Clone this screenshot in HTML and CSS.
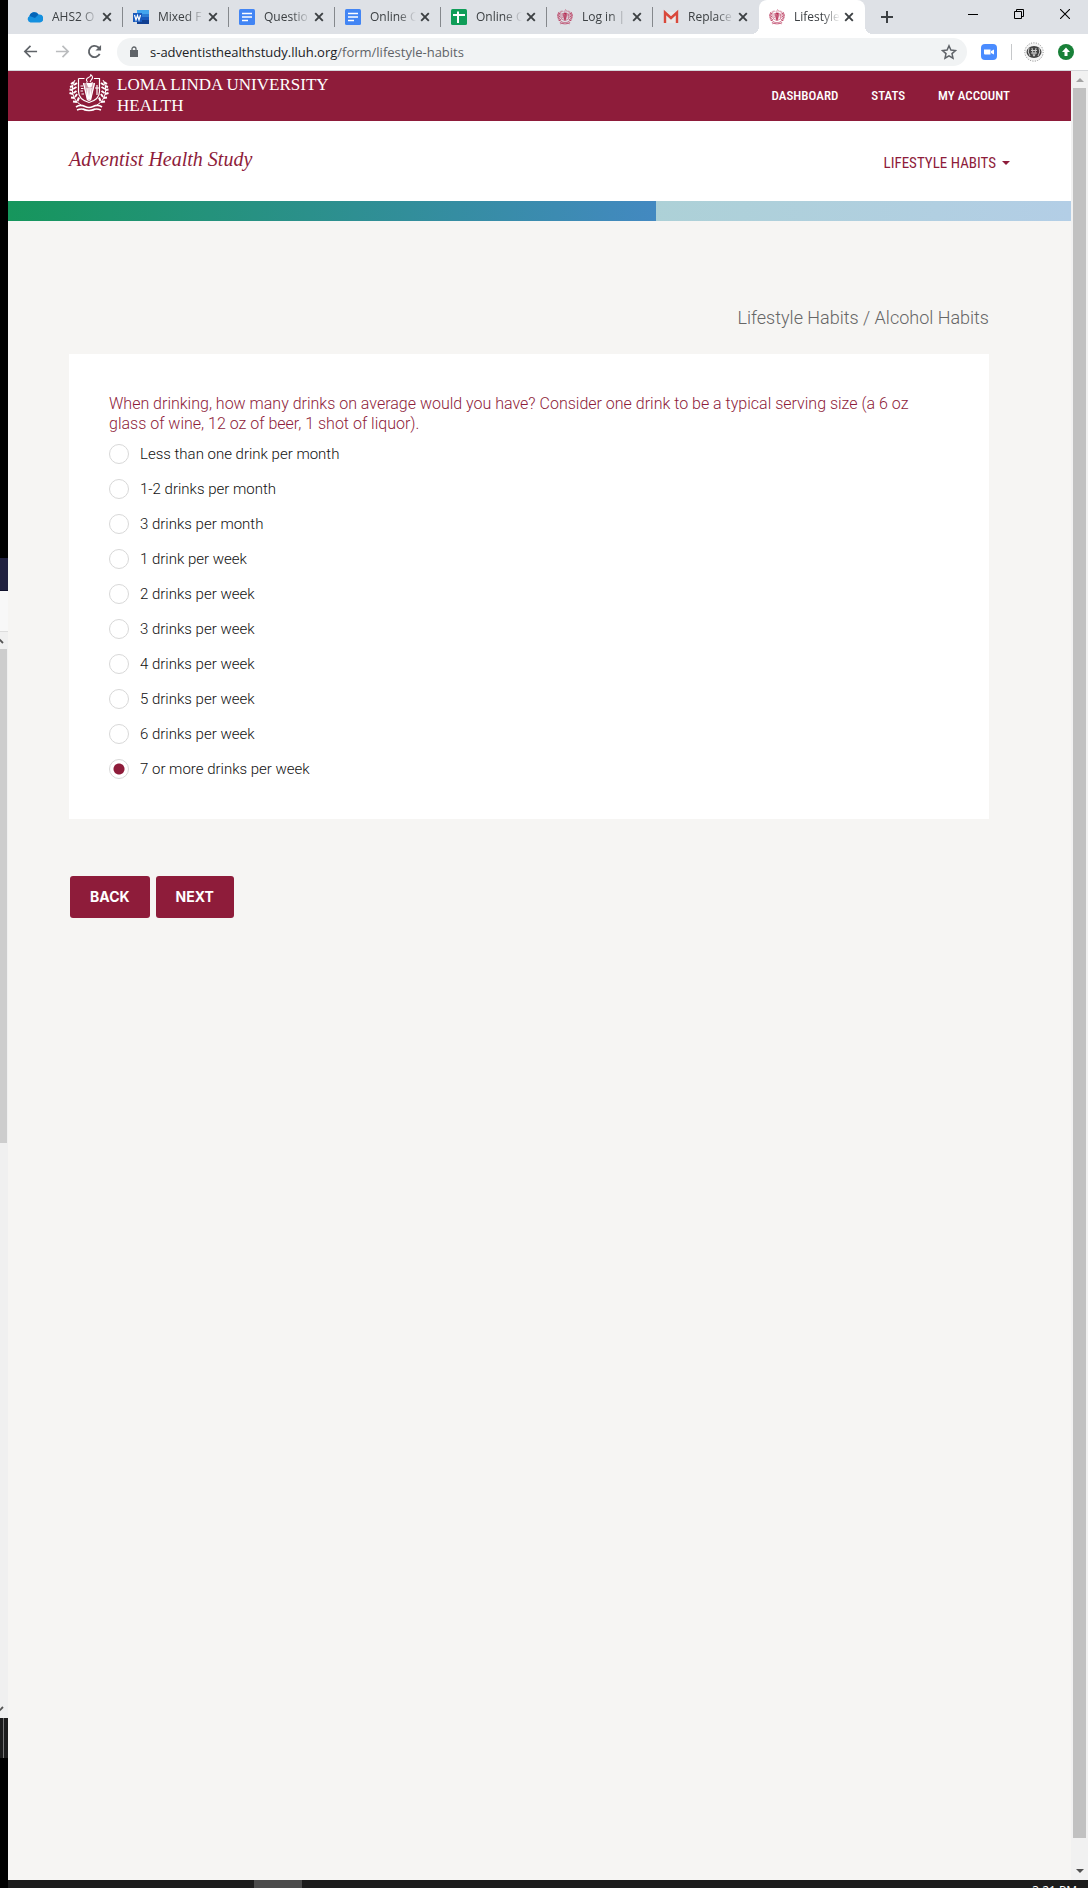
FILE: index.html
```html
<!DOCTYPE html>
<html lang="en">
<head>
<meta charset="utf-8">
<meta name="viewport" content="width=device-width, initial-scale=1">
<title>Lifestyle Habits | Adventist Health Study</title>
<link rel="stylesheet" href="styles.css">
</head>
<body>
<svg class="sprite" aria-hidden="true">
  <symbol id="x" viewBox="0 0 10 10"><path d="M1.2 1.2l7.6 7.6M8.8 1.2L1.2 8.8" stroke="#3c4043" stroke-width="1.9"/></symbol>
  <symbol id="doc" viewBox="0 0 16 16"><rect width="16" height="16" rx="1.5" fill="#4285f4"/><path d="M3 4.500h10M3 8h10M3 11.500h6" stroke="#fff" stroke-width="1.7"/></symbol>
  <symbol id="crest" viewBox="0 0 40 38">
    <path d="M14 9h12l-4.500 18h-3z" fill="currentColor" opacity=".55"/>
    <path d="M17 8q3 2 7 0l-1.500 5q-2 1-3.500 0z" fill="currentColor"/>
    <g fill="none" stroke="currentColor">
      <path d="M9.500 4.500h6M25 4.500h5.500v13q0 8-10.500 11Q9.500 25.500 9.500 17.500v-13" stroke-width="1.200"/>
      <path d="M14.500 9l4 17M25.500 9l-4 17M20 14v13M18 14l1 11M22 14l-1 11" stroke-width="1.200"/>
      <path d="M18.500 8q-2.500-3 1-4.500 3-1.500 2-3 3.500 2.500 1 5L21 8" stroke-width="1.100"/>
      <path d="M11.500 12h2.500M12 14.500h2.500M11.500 17h2.500M12.500 20h2.500M28 11v10M26 14h4" stroke-width="1.200"/>
      <path d="M6 6C1 14 3 26 12 31M34 6c5 8 3 20-6 25" stroke-width="1"/>
      <path d="M5 8L2 10M4 12L1 13M3.500 16l-3-.5M4 20l-3.500-1M5.500 24L2 23.500M8 28l-4-.5M5 11l3-2M4 15l3.500-2M4.500 19l3-2M6 23l2-3M8.500 27l1.500-3.500M35 8l3 2M36 12l3 1M36.500 16l3-.5M36 20l3.500-1M34.500 24l3.500-.5M32 28l4-.5M35 11l-3-2M36 15l-3.500-2M35.500 19l-3-2M34 23l-2-3M31.500 27L30 23.500" stroke-width="2"/>
      <path d="M7 33q4-3 9-.5 4 2 8 0 5-2.500 9 .5M8 36q5-2 8 0M32 36q-5-2-8 0M14 35q6 3 12 0" stroke-width="1.600"/>
    </g>
  </symbol>
</svg>
<div class="desktop">
  <aside class="behind" aria-hidden="true">
    <div class="behind-navy"></div>
    <div class="behind-pale"></div>
    <div class="behind-track">
      <svg class="edge-arrow" viewBox="0 0 4 6"><path d="M-1 1l4 4" stroke="#555" stroke-width="1.800"/></svg>
      <div class="behind-thumb"></div>
      <svg class="edge-arrow" viewBox="0 0 4 6"><path d="M-1 5l4-4" stroke="#555" stroke-width="1.800"/></svg>
    </div>
    <div class="behind-task"></div>
  </aside>

  <div class="browser">
    <div class="tabstrip">
      <div class="tab"><svg class="fav" viewBox="0 0 16 16"><path d="M3.500 13.500A3.500 3.500 0 0 1 2.500 7 5 5 0 0 1 11.500 5.500a4 4 0 0 1 1.500 8z" fill="#1490df"/><path d="M2.500 7A5 5 0 0 1 11.500 5.500L8 9z" fill="#0364b8"/></svg><span>AHS2 O</span><button aria-label="Close tab"><svg><use href="#x"/></svg></button></div>
      <div class="tab"><svg class="fav" viewBox="0 0 16 16"><path d="M4 1h12v4H4z" fill="#41a5ee"/><path d="M4 5h12v3H4z" fill="#2b7cd3"/><path d="M4 8h12v3H4z" fill="#185abd"/><path d="M4 11h12v4H4z" fill="#103f91"/><path d="M0 4h9v9H0z" fill="#185abd"/><path d="M1.500 6l1.500 5 1.500-4.500L6 11l1.500-5" fill="none" stroke="#fff" stroke-width="1.200"/></svg><span>Mixed F</span><button aria-label="Close tab"><svg><use href="#x"/></svg></button></div>
      <div class="tab"><svg class="fav"><use href="#doc"/></svg><span>Questio</span><button aria-label="Close tab"><svg><use href="#x"/></svg></button></div>
      <div class="tab"><svg class="fav"><use href="#doc"/></svg><span>Online C</span><button aria-label="Close tab"><svg><use href="#x"/></svg></button></div>
      <div class="tab"><svg class="fav" viewBox="0 0 16 16"><rect width="16" height="16" rx="1.500" fill="#0f9d58"/><path d="M2 6h12M7 2.500v11.500" stroke="#fff" stroke-width="2"/></svg><span>Online C</span><button aria-label="Close tab"><svg><use href="#x"/></svg></button></div>
      <div class="tab"><svg class="fav crest"><use href="#crest"/></svg><span>Log in |</span><button aria-label="Close tab"><svg><use href="#x"/></svg></button></div>
      <div class="tab"><svg class="fav" viewBox="0 0 16 16"><path d="M2 3h12v11H2z" fill="#e8e8e8"/><path d="M2 14V3.500l6 5.500 6-5.500V14" fill="none" stroke="#d9483b" stroke-width="2.400"/></svg><span>Replace</span><button aria-label="Close tab"><svg><use href="#x"/></svg></button></div>
      <div class="tab active"><svg class="fav crest"><use href="#crest"/></svg><span>Lifestyle</span><button aria-label="Close tab"><svg><use href="#x"/></svg></button></div>
      <button class="newtab" aria-label="New tab"><svg viewBox="0 0 12 12"><path d="M6 0v12M0 6h12" stroke="#3c4043" stroke-width="2"/></svg></button>
      <div class="winbuttons">
        <button aria-label="Minimize"><svg viewBox="0 0 10 10"><path d="M0 5.500h10" stroke="#000"/></svg></button>
        <button aria-label="Restore"><svg viewBox="0 0 10 10"><path d="M.5 2.500h7v7h-7zM2.500 2.500v-2h7v7h-2" fill="none" stroke="#000"/></svg></button>
        <button aria-label="Close"><svg viewBox="0 0 10 10"><path d="M0 0l10 10M10 0L0 10" stroke="#000" stroke-width="1.100"/></svg></button>
      </div>
    </div>

    <div class="toolbar">
      <button class="tool" aria-label="Back"><svg viewBox="0 0 16 16"><path d="M15 8H2M8 2L2 8l6 6" fill="none" stroke="#5f6368" stroke-width="1.800"/></svg></button>
      <button class="tool" aria-label="Forward"><svg viewBox="0 0 16 16"><path d="M1 8h13M8 2l6 6-6 6" fill="none" stroke="#babcbe" stroke-width="1.800"/></svg></button>
      <button class="tool" aria-label="Reload"><svg viewBox="0 0 16 16"><path d="M13.500 10.500A6 6 0 1 1 12 3.500L14 5.500" fill="none" stroke="#5f6368" stroke-width="2"/><path d="M15 1v6H9z" fill="#5f6368"/></svg></button>
      <div class="omnibox">
        <svg class="lock" viewBox="0 0 8 12"><path d="M0 4h8v7H0z" fill="#5f6368"/><path d="M2 4V3a2 2 0 0 1 4 0v1" fill="none" stroke="#5f6368" stroke-width="1.300"/></svg>
        <div class="url">s-adventisthealthstudy.lluh.org<span>/form/lifestyle-habits</span></div>
        <button aria-label="Bookmark this tab"><svg viewBox="0 0 16 16"><path d="M8 1.800l1.900 4.300 4.600.4-3.500 3.100 1 4.600L8 11.800l-4 2.400 1-4.600-3.500-3.100 4.600-.4z" fill="none" stroke="#5f6368" stroke-width="1.500"/></svg></button>
      </div>
      <svg class="ext" viewBox="0 0 16 16"><rect width="16" height="16" rx="4" fill="#4a8cff"/><path d="M3 5.500h6.500v5H4a1 1 0 0 1-1-1zM10 7l3-1.500v5L10 9z" fill="#fff"/></svg>
      <div class="divider"></div>
      <svg class="avatar" viewBox="0 0 20 20"><circle cx="10" cy="10" r="9.200" fill="#f4f4f4" stroke="#888" stroke-dasharray="1 1.500"/><ellipse cx="10" cy="10" rx="7.500" ry="6" fill="#444"/><path d="M5 6q-2 4 1 8M15 6q2 4-1 8M8 6l1.500 8h1L12 6M7 8.500h6M7 11h6" fill="none" stroke="#ccc"/></svg>
      <svg class="ext" viewBox="0 0 16 16"><circle cx="8" cy="8" r="8" fill="#188038"/><path d="M8 3.500l4 4.500H9.500v4h-3V8H4z" fill="#fff"/></svg>
    </div>

    <div class="viewport">
      <div class="page">
        <header class="masthead">
          <a class="brand" href="#"><svg class="logo"><use href="#crest"/></svg><span>LOMA LINDA UNIVERSITY<br>HEALTH</span></a>
          <nav class="mainnav"><a href="#">DASHBOARD</a><a href="#">STATS</a><a href="#">MY ACCOUNT</a></nav>
        </header>
        <div class="subhead">
          <a class="study" href="#">Adventist Health Study</a>
          <button class="section">LIFESTYLE HABITS<i class="caret"></i></button>
        </div>
        <div class="progress" role="progressbar" aria-label="Survey progress" aria-valuenow="61" aria-valuemin="0" aria-valuemax="100"><div style="width:61%"></div></div>
        <main>
          <p class="crumbs">Lifestyle Habits / Alcohol Habits</p>
          <form>
            <fieldset class="card">
              <legend>When drinking, how many drinks on average would you have? Consider one drink to be a typical serving size (a 6 oz glass of wine, 12 oz of beer, 1 shot of liquor).</legend>
              <label><input type="radio" name="drinks">Less than one drink per month</label>
              <label><input type="radio" name="drinks">1-2 drinks per month</label>
              <label><input type="radio" name="drinks">3 drinks per month</label>
              <label><input type="radio" name="drinks">1 drink per week</label>
              <label><input type="radio" name="drinks">2 drinks per week</label>
              <label><input type="radio" name="drinks">3 drinks per week</label>
              <label><input type="radio" name="drinks">4 drinks per week</label>
              <label><input type="radio" name="drinks">5 drinks per week</label>
              <label><input type="radio" name="drinks">6 drinks per week</label>
              <label><input type="radio" name="drinks" checked>7 or more drinks per week</label>
            </fieldset>
            <div class="actions"><button type="button">BACK</button><button type="button">NEXT</button></div>
          </form>
        </main>
      </div>
      <div class="scrollbar" aria-hidden="true">
        <svg viewBox="0 0 8 4"><path d="M0 4l4-4 4 4z" fill="#a3a3a3"/></svg>
        <div class="thumb"></div>
        <svg viewBox="0 0 8 4"><path d="M0 0h8L4 4z" fill="#505050"/></svg>
      </div>
    </div>
    <div class="taskbar"><div class="task"></div><time>3:21 PM</time></div>
  </div>
</div>
</body>
</html>
```
FILE: styles.css
```css
* { box-sizing: border-box; }
body { margin: 0; font-family: Roboto, "Liberation Sans", sans-serif; background: #000; }
button { font: inherit; border: 0; background: none; padding: 0; margin: 0; display: flex; align-items: center; justify-content: center; }
a { color: inherit; text-decoration: none; }
svg { display: block; flex: none; }
.sprite { position: absolute; width: 0; height: 0; }

.desktop { display: flex; min-height: 100vh; }

/* sliver of the windows behind the browser */
.behind { width: 8px; flex: none; display: flex; flex-direction: column; padding: 558px 0 130px; }
.behind-navy { height: 33px; background: #20213f; border-bottom: 1px solid #11122c; }
.behind-pale { height: 40px; background: #f8f8f8; }
.behind-track { flex: 1; background: #f0f0f0; border-top: 1px solid #ddd; display: flex; flex-direction: column; justify-content: space-between; padding: 6px 0; }
.edge-arrow { width: 4px; height: 6px; }
.behind-thumb { width: 7px; height: 494px; margin: 5px 0 auto; background: #cdcdcd; }
.behind-task { height: 40px; background: linear-gradient(90deg, #1c1c1c 3px, #777 3px, #777 4px, #1c1c1c 4px); }

.browser { flex: 1; min-width: 0; display: flex; flex-direction: column; background: #fff; }

.tabstrip { height: 34px; background: #dee1e6; display: flex; padding-left: 9px; font: 12px/16px "Open Sans", "Noto Sans", sans-serif; color: #3c4043; }
.tab { flex: 0 1 106px; min-width: 0; display: flex; align-items: center; padding: 0 11px 0 10px; position: relative; }
.tab:not(.active)::after { content: ""; position: absolute; right: 0; top: 7px; width: 1px; height: 20px; background: #85888c; }
.tab:nth-child(7)::after { display: none; }
.tab span { flex: 1; min-width: 0; margin: 0 0 0 9px; white-space: nowrap; mask-image: linear-gradient(90deg, #000 28px, transparent 46px); }
.tab button svg { width: 10px; height: 10px; }
.tab.active { background: #fff; border-radius: 8px 8px 0 0; }
.tab.active::before { content: ""; position: absolute; left: -8px; right: -8px; bottom: 0; height: 8px; background: radial-gradient(circle at 0 0, transparent 8px, #fff 8px) left / 8px 8px no-repeat, radial-gradient(circle at 100% 0, transparent 8px, #fff 8px) right / 8px 8px no-repeat; }
.fav { width: 16px; height: 16px; }
.crest { color: #b52b52; }
.newtab { width: 44px; }
.newtab svg { width: 12px; height: 12px; }
.winbuttons { margin-left: auto; display: flex; height: 28px; }
.winbuttons button { width: 46px; }
.winbuttons svg { width: 10px; height: 10px; }

.toolbar { height: 37px; display: flex; align-items: center; padding: 0 14px 1px 6px; border-bottom: 1px solid #d5d7da; }
.tool { width: 32px; height: 28px; }
.tool svg { width: 15px; height: 15px; }
.omnibox { flex: 1; height: 28px; margin: 0 14px 0 7px; padding: 0 10px 0 13px; border-radius: 14px; background: #f1f3f4; display: flex; align-items: center; }
.lock { width: 8px; height: 12px; }
.url { flex: 1; margin-left: 12px; font: 13px/20px "Open Sans", "Noto Sans", sans-serif; color: #202124; }
.url span { color: #5f6368; }
.omnibox button svg { width: 16px; height: 16px; }
.ext { width: 16px; height: 16px; }
.divider { width: 1px; height: 16px; margin: 0 12px 0 14px; background: #c6c8ca; }
.avatar { width: 20px; height: 20px; margin-right: 14px; }

.viewport { flex: 1; display: flex; }
.page { flex: 1; min-width: 0; background: #f6f5f3; }
.scrollbar { width: 17px; background: #f1f1f1; display: flex; flex-direction: column; align-items: center; padding: 7px 0 7px; }
.scrollbar svg { width: 8px; height: 4px; }
.thumb { flex: 1; width: 13px; margin: 6px 0 31px; background: #c1c1c1; }

.masthead { height: 50px; background: #8e1c3a; color: #fff; display: flex; justify-content: space-between; padding: 0 61px; }
.brand { display: flex; align-items: flex-start; gap: 8px; padding-top: 3px; font: 17px/21px "Liberation Serif", serif; }
.logo { width: 40px; height: 38px; }
.mainnav { display: flex; align-items: center; gap: 33px; font: 500 13px/20px "Roboto Condensed", "Liberation Sans Narrow", sans-serif; }
.subhead { height: 80px; background: #fff; color: #8e1c3a; display: flex; align-items: center; justify-content: space-between; padding: 0 61px; }
.study { font: italic 20px/26px "Liberation Serif", serif; padding-bottom: 4px; }
.section { color: inherit; font: 15px/20px "Roboto Condensed", "Liberation Sans Narrow", sans-serif; padding-top: 3px; }
.caret { margin-left: 6px; border: 4px solid transparent; border-top-color: currentColor; border-bottom: 0; }
.progress { height: 20px; background: linear-gradient(90deg, #a3d5bf, #b3cee6); }
.progress div { height: 100%; background: linear-gradient(90deg, #16965c, #4389c1); }

main { padding: 85px 82px 0 61px; font-weight: 300; }
.crumbs { margin: 0 0 24px; text-align: right; font-size: 18px; line-height: 24px; color: #666; }
.card { margin: 0; border: 0; background: #fff; padding: 40px; min-width: 0; display: flex; flex-direction: column; gap: 15px; font-size: 15px; line-height: 20px; color: #111; }
.card legend { float: left; padding: 0 20px 0 0; margin-bottom: -5px; font-size: 16px; color: #8e1c3a; }
.card label { display: flex; gap: 11px; }
.card input { appearance: none; width: 20px; height: 20px; margin: 0; border: 1px solid #d8d8d8; border-radius: 50%; background: #fff; }
.card input:checked { background: radial-gradient(circle, #8e1c3a 5px, #fff 6px); }
.actions { display: flex; gap: 6px; padding: 57px 0 0 1px; }
.actions button { padding: 11px 20px; border-radius: 3px; background: #8e1c3a; color: #fff; font: bold 14px/20px Inter, sans-serif; }

.taskbar { height: 8px; background: #1c1c1c; display: flex; overflow: hidden; padding: 0 11px 0 246px; justify-content: space-between; }
.task { width: 48px; background: #4b4b4b; }
.taskbar time { color: #fff; font: 12px/16px "Open Sans", sans-serif; padding-top: 3px; }
```
